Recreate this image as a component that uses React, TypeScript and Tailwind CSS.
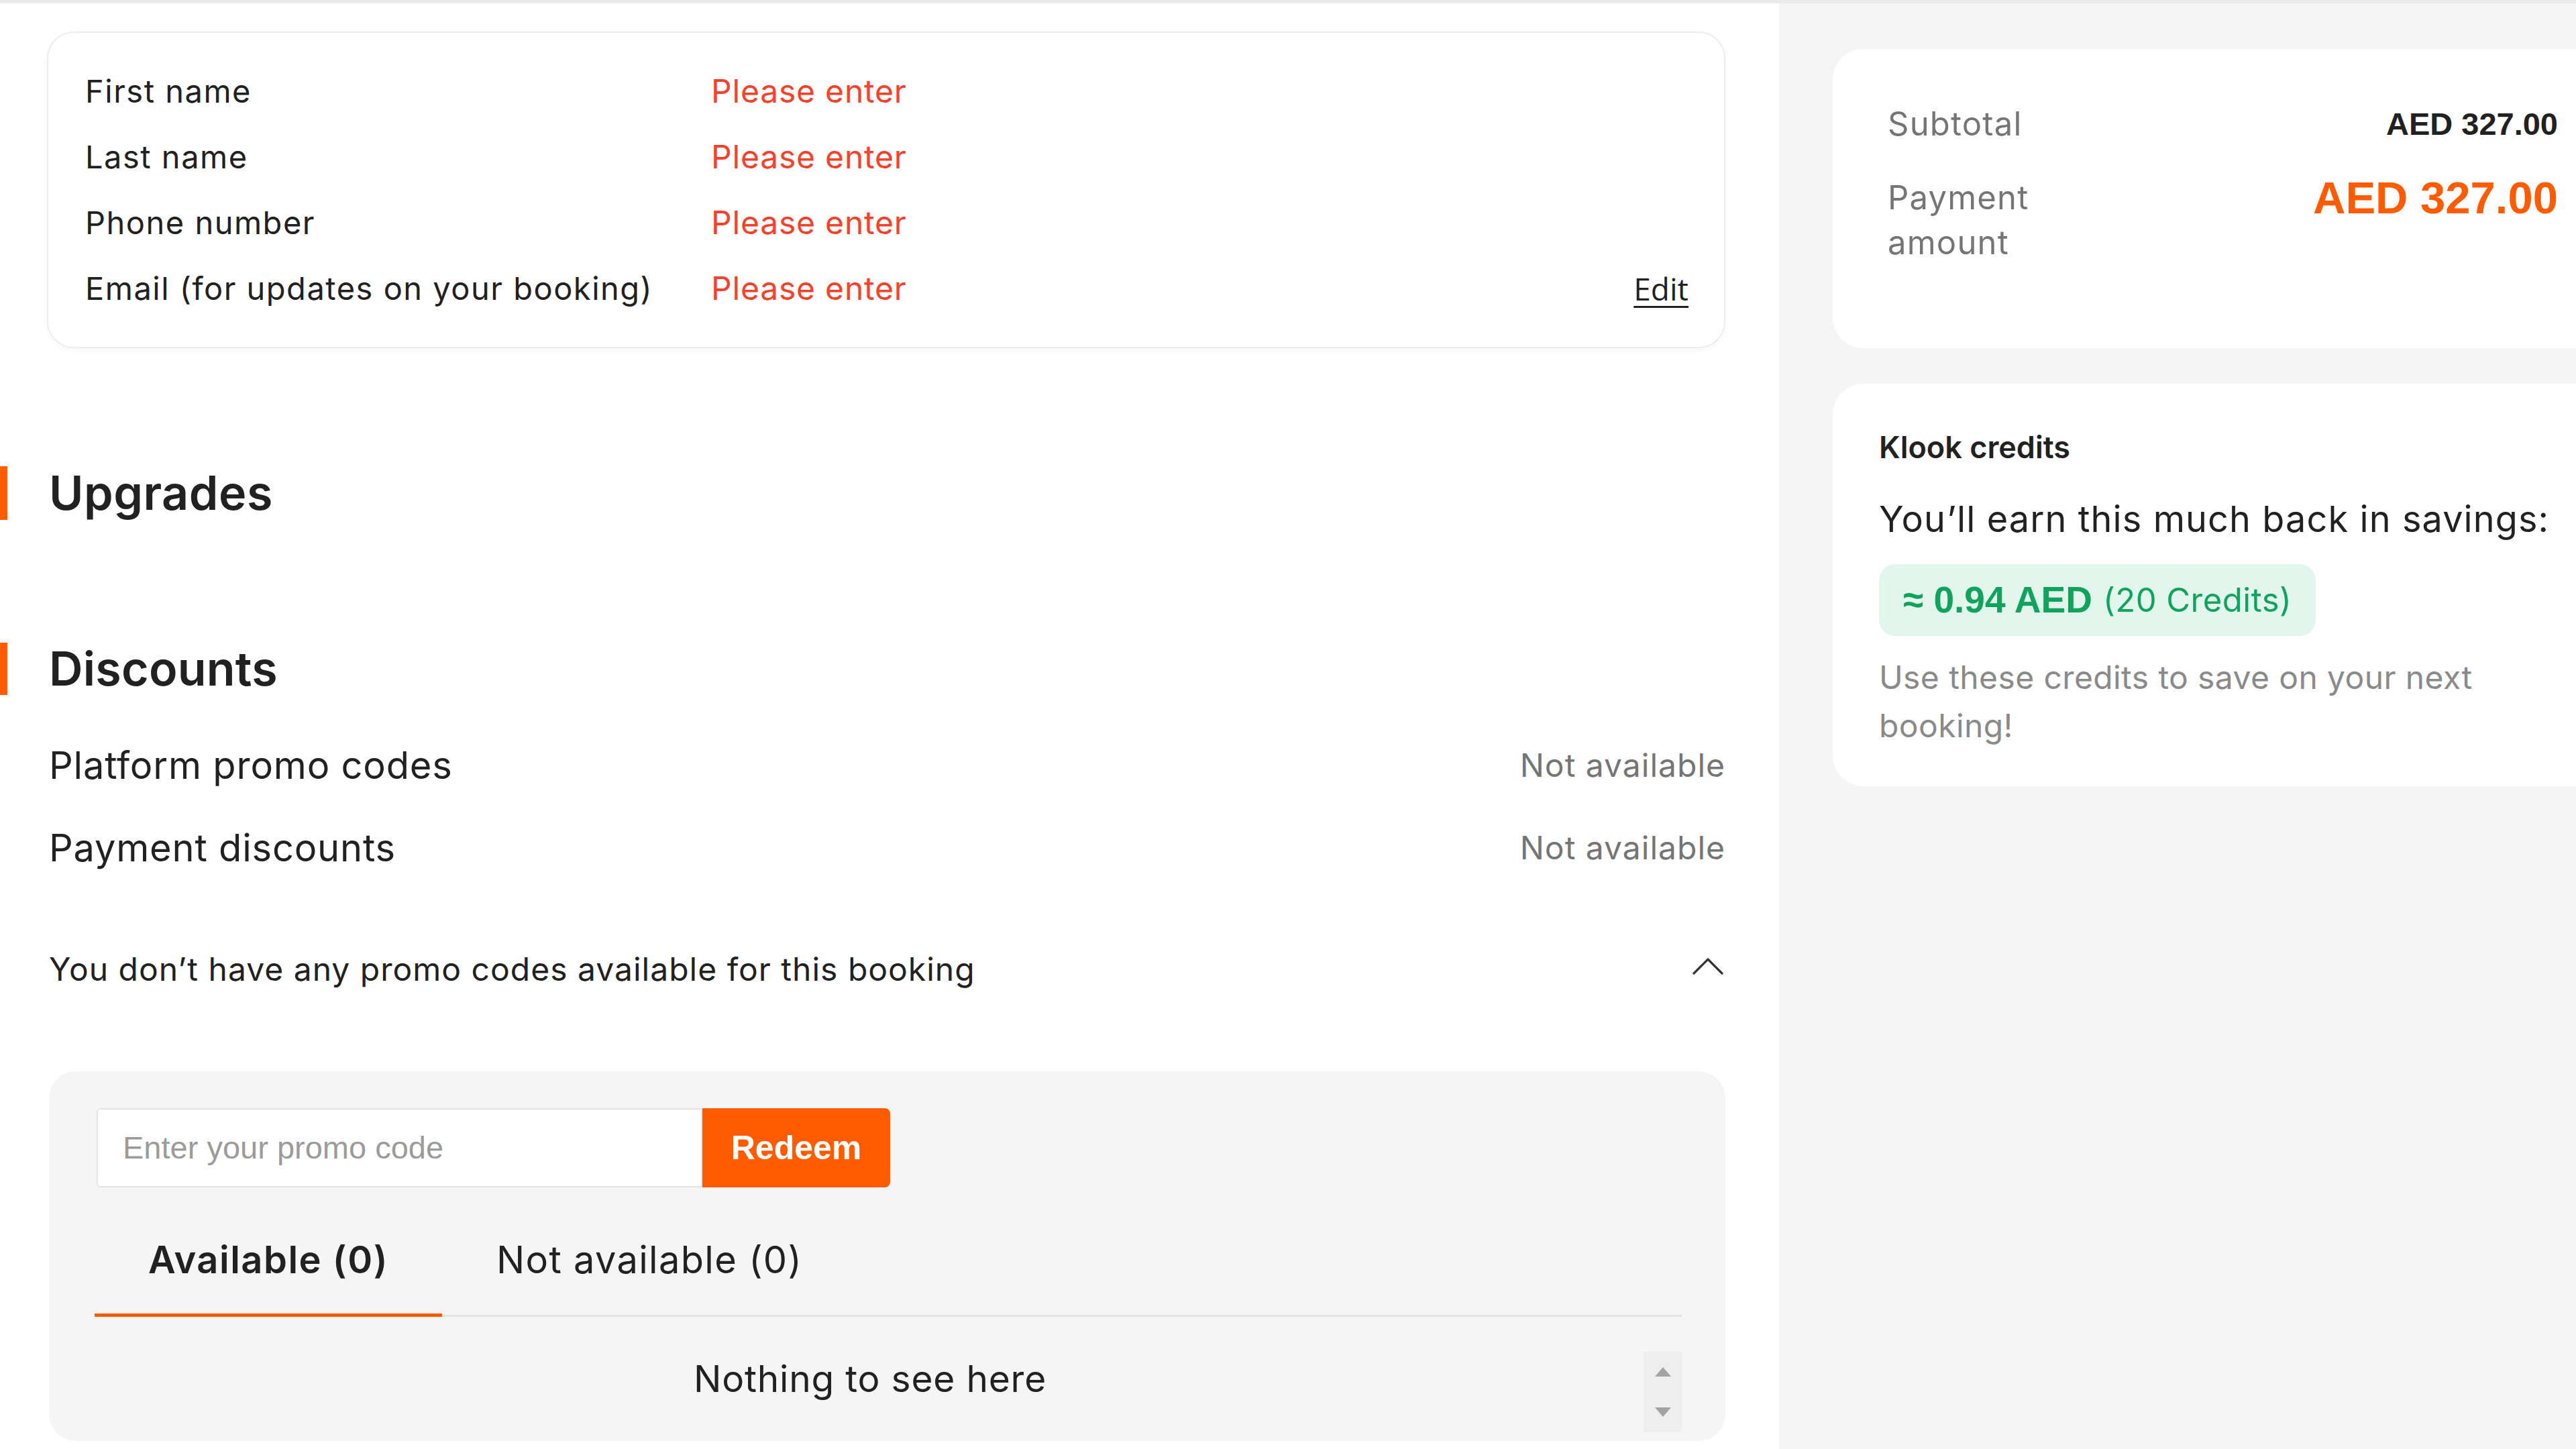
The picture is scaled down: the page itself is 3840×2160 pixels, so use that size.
import React from "react";

function ChevronUp() {
  return (
    <svg width="48" height="28" viewBox="0 0 48 28" fill="none">
      <polyline points="3,25 24,4 45,25" stroke="#333333" strokeWidth="3.2" strokeLinecap="round" strokeLinejoin="round" />
    </svg>
  );
}

function Triangle({ up }: { up: boolean }) {
  return (
    <svg width="26" height="16" viewBox="0 0 26 16">
      {up ? <polygon points="13,1 25,15 1,15" fill="#a3a3a3" /> : <polygon points="1,1 25,1 13,15" fill="#a3a3a3" />}
    </svg>
  );
}

const rows = [
  { label: "First name", value: "Please enter" },
  { label: "Last name", value: "Please enter" },
  { label: "Phone number", value: "Please enter" },
  { label: "Email (for updates on your booking)", value: "Please enter", edit: true },
];

export default function App() {
  return (
    <div className="w-[3840px] h-[2160px] overflow-hidden bg-white flex flex-col font-['Inter',_'Open_Sans',_sans-serif] text-[#212121]">
      <div className="h-[5px] shrink-0 bg-[#ebebeb]" />
      <div className="flex flex-1 min-h-0">
        {/* Left column */}
        <div className="w-[2652px] shrink-0 bg-white flex flex-col">
          {/* Contact card */}
          <div className="mt-[42px] ml-[70px] w-[2502px] rounded-[40px] border-2 border-[#ededed] shadow-[0_3px_8px_rgba(0,0,0,0.04)] pl-[55px] pr-[46px] py-[38px]">
            {rows.map((r) => (
              <div key={r.label} className="h-[98px] flex items-center">
                <div className="w-[933px] text-[47px] tracking-[1.5px] text-[#212121]">{r.label}</div>
                <div className="flex-1 text-[48px] tracking-[0.8px] text-[#f8412b]">{r.value}</div>
                {r.edit && (
                  <div className="mr-[7px] text-[46px] underline underline-offset-[8px] decoration-[3px] font-['Open_Sans',_sans-serif] text-[#212121]">
                    Edit
                  </div>
                )}
              </div>
            ))}
          </div>

          {/* Upgrades */}
          <div className="mt-[176px] flex items-center h-[80px]">
            <div className="w-[11px] h-full bg-[#ff5b00]" />
            <div className="ml-[62px] text-[70px] font-semibold leading-none tracking-[0.5px]">Upgrades</div>
          </div>

          {/* Discounts */}
          <div className="mt-[183px] flex items-center h-[78px]">
            <div className="w-[11px] h-full bg-[#ff5b00]" />
            <div className="ml-[62px] text-[70px] font-semibold leading-none tracking-[0.2px]">Discounts</div>
          </div>

          <div className="ml-[73px] w-[2499px] mt-[44px]">
            <div className="h-[122px] flex items-center justify-between">
              <div className="text-[56px] tracking-[0.8px]">Platform promo codes</div>
              <div className="text-[48px] text-[#757575] tracking-[1px]">Not available</div>
            </div>
            <div className="h-[123px] flex items-center justify-between">
              <div className="text-[56px] tracking-[0.8px]">Payment discounts</div>
              <div className="text-[48px] text-[#757575] tracking-[1px]">Not available</div>
            </div>
            <div className="mt-[60px] h-[120px] flex items-center justify-between">
              <div className="text-[48px] tracking-[1px]">You don’t have any promo codes available for this booking</div>
              <div className="mr-[2px] -mt-[10px]">
                <ChevronUp />
              </div>
            </div>
          </div>

          {/* Promo box */}
          <div className="mt-[92px] ml-[73px] w-[2499px] rounded-[40px] bg-[#f5f5f5] pl-[71px] pr-[65px] pt-[55px] pb-[13px]">
            <div className="flex h-[118px]">
              <div className="w-[903px] bg-white border-2 border-[#e4e4e4] rounded-l-[6px] pl-[37px] flex items-center font-['Liberation_Sans',_Arial,_sans-serif] text-[47px] text-[#9b9b9b]">
                Enter your promo code
              </div>
              <div className="w-[280px] bg-[#ff5b00] rounded-r-[8px] flex items-center justify-center font-['Liberation_Sans',_Arial,_sans-serif] font-bold text-[50px] text-white">
                Redeem
              </div>
            </div>

            <div className="mt-[40px] flex border-b-[3px] border-[#e2e2e2] -ml-[3px]">
              <div className="h-[153px] -mb-[3px] border-b-[5px] border-[#ff5b00] px-[80px] pb-[12px] flex items-center text-[56px] tracking-[1.5px] font-semibold">
                Available (0)
              </div>
              <div className="h-[150px] px-[81px] pb-[14px] flex items-center text-[56px] tracking-[1.3px]">Not available (0)</div>
            </div>

            <div className="mt-[52px] h-[120px] flex">
              <div className="flex-1 flex justify-center">
                <div className="leading-[80px] text-[55px] tracking-[0.8px]">Nothing to see here</div>
              </div>
              <div className="w-[57px] bg-[#eeeeee] flex flex-col items-center justify-between py-[22px]">
                <Triangle up />
                <Triangle up={false} />
              </div>
            </div>
          </div>
        </div>

        {/* Right column */}
        <div className="flex-1 bg-[#f5f5f5] pl-[80px] pt-[68px]">
          <div className="w-[1150px] h-[446px] bg-white rounded-[46px] pl-[82px] pr-[69px] pt-[80px]">
            <div className="h-[64px] flex items-center justify-between">
              <div className="text-[49px] tracking-[1.2px] text-[#757575]">Subtotal</div>
              <div className="font-['Liberation_Sans',_Arial,_sans-serif] font-bold text-[47px] text-[#212121]">AED 327.00</div>
            </div>
            <div className="mt-[44px] flex items-start justify-between">
              <div className="w-[300px] text-[49px] tracking-[1.2px] leading-[67px] text-[#757575]">Payment amount</div>
              <div className="font-['Liberation_Sans',_Arial,_sans-serif] font-bold text-[67px] leading-[67px] text-[#ff5b00]">
                AED 327.00
              </div>
            </div>
          </div>

          <div className="mt-[53px] w-[1150px] h-[600px] bg-white rounded-[46px] pl-[69px] pt-[63px]">
            <div className="text-[45px] leading-[64px] font-semibold">Klook credits</div>
            <div className="mt-[43px] text-[54px] tracking-[1.1px] leading-[64px]">You’ll earn this much back in savings:</div>
            <div className="mt-[35px] w-fit h-[107px] px-[36px] rounded-[24px] bg-[#e3f6ee] flex items-center text-[#0fa35c]">
              <span className="font-['Liberation_Sans',_Arial,_sans-serif] font-bold text-[55px]">≈ 0.94 AED</span>
              <span className="ml-[16px] text-[49px] tracking-[0.5px]">(20 Credits)</span>
            </div>
            <div className="mt-[26px] max-w-[960px] text-[48px] tracking-[0.4px] leading-[72px] text-[#8a8a8a]">
              Use these credits to save on your next booking!
            </div>
          </div>
        </div>
      </div>
    </div>
  );
}
